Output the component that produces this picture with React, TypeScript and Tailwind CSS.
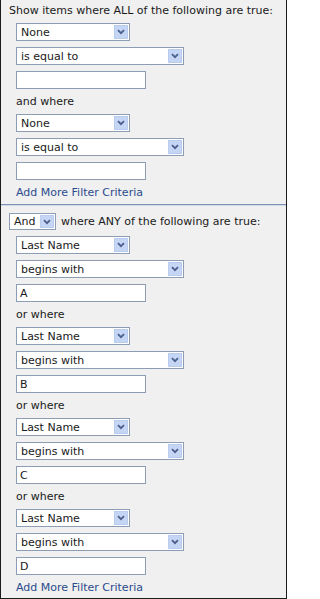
import React from "react"

const font = { fontFamily: "'DejaVu Sans', Verdana, sans-serif" }

function Arrow() {
  return (
    <div className="flex h-full w-[14px] items-center justify-center border border-[#b9cbef] bg-[#c5d5f4]">
      <svg width="8" height="6" viewBox="0 0 8 6">
        <path d="M1 1.2 L4 4.2 L7 1.2" fill="none" stroke="#4a5f8c" strokeWidth="1.8" />
      </svg>
    </div>
  )
}

function Select({ value, width }: { value: string; width: string }) {
  return (
    <div className={`flex h-[18px] ${width} items-center border border-[#8e9db6] bg-white p-px`}>
      <span className="flex-1 pl-[3px] text-[11px] leading-none text-[#1a1a1a]">{value}</span>
      <Arrow />
    </div>
  )
}

function Input({ value }: { value: string }) {
  return (
    <div className="flex h-[18px] w-[130px] items-center border border-[#8e9db6] bg-white pl-[3px] text-[11px] leading-none text-[#1a1a1a]">
      {value}
    </div>
  )
}

function Label({ children }: { children: React.ReactNode }) {
  return <div className="h-[13px] text-[11px] leading-[13px] text-[#1a1a1a]">{children}</div>
}

function Link() {
  return <div className="h-[13px] text-[11px] leading-[13px] text-[#2b4a8c]">Add More Filter Criteria</div>
}

export default function App() {
  const anyRows = ["A", "B", "C", "D"]

  return (
    <div style={font} className="h-[599px] w-[287px] overflow-hidden border-x border-b border-[#1c1c1c] bg-[#f0f0f0]">
      <div className="pl-[8px] pt-[4px]">
        <Label>Show items where ALL of the following are true:</Label>
      </div>
      <div className="flex flex-col gap-[6px] pl-[15px] pt-[6px]">
        <Select value="None" width="w-[114px]" />
        <Select value="is equal to" width="w-[168px]" />
        <Input value="" />
        <Label>and where</Label>
        <Select value="None" width="w-[114px]" />
        <Select value="is equal to" width="w-[168px]" />
        <Input value="" />
        <Link />
      </div>

      <div className="mt-[5px] h-[2px] w-full border-t border-[#7d90b8] bg-[#d4dbe8]" />

      <div className="flex items-center gap-[5px] pl-[8px] pt-[7px]">
        <div className="flex h-[17px] w-[47px] items-center border border-[#8e9db6] bg-white p-px">
          <span className="flex-1 pl-[3px] text-[11px] leading-none text-[#1a1a1a]">And</span>
          <Arrow />
        </div>
        <Label>where ANY of the following are true:</Label>
      </div>

      <div className="flex flex-col gap-[6px] pl-[15px] pt-[6px]">
        {anyRows.map((v, i) => (
          <React.Fragment key={v}>
            {i > 0 && <Label>or where</Label>}
            <Select value="Last Name" width="w-[114px]" />
            <Select value="begins with" width="w-[168px]" />
            <Input value={v} />
          </React.Fragment>
        ))}
        <Link />
      </div>
    </div>
  )
}
